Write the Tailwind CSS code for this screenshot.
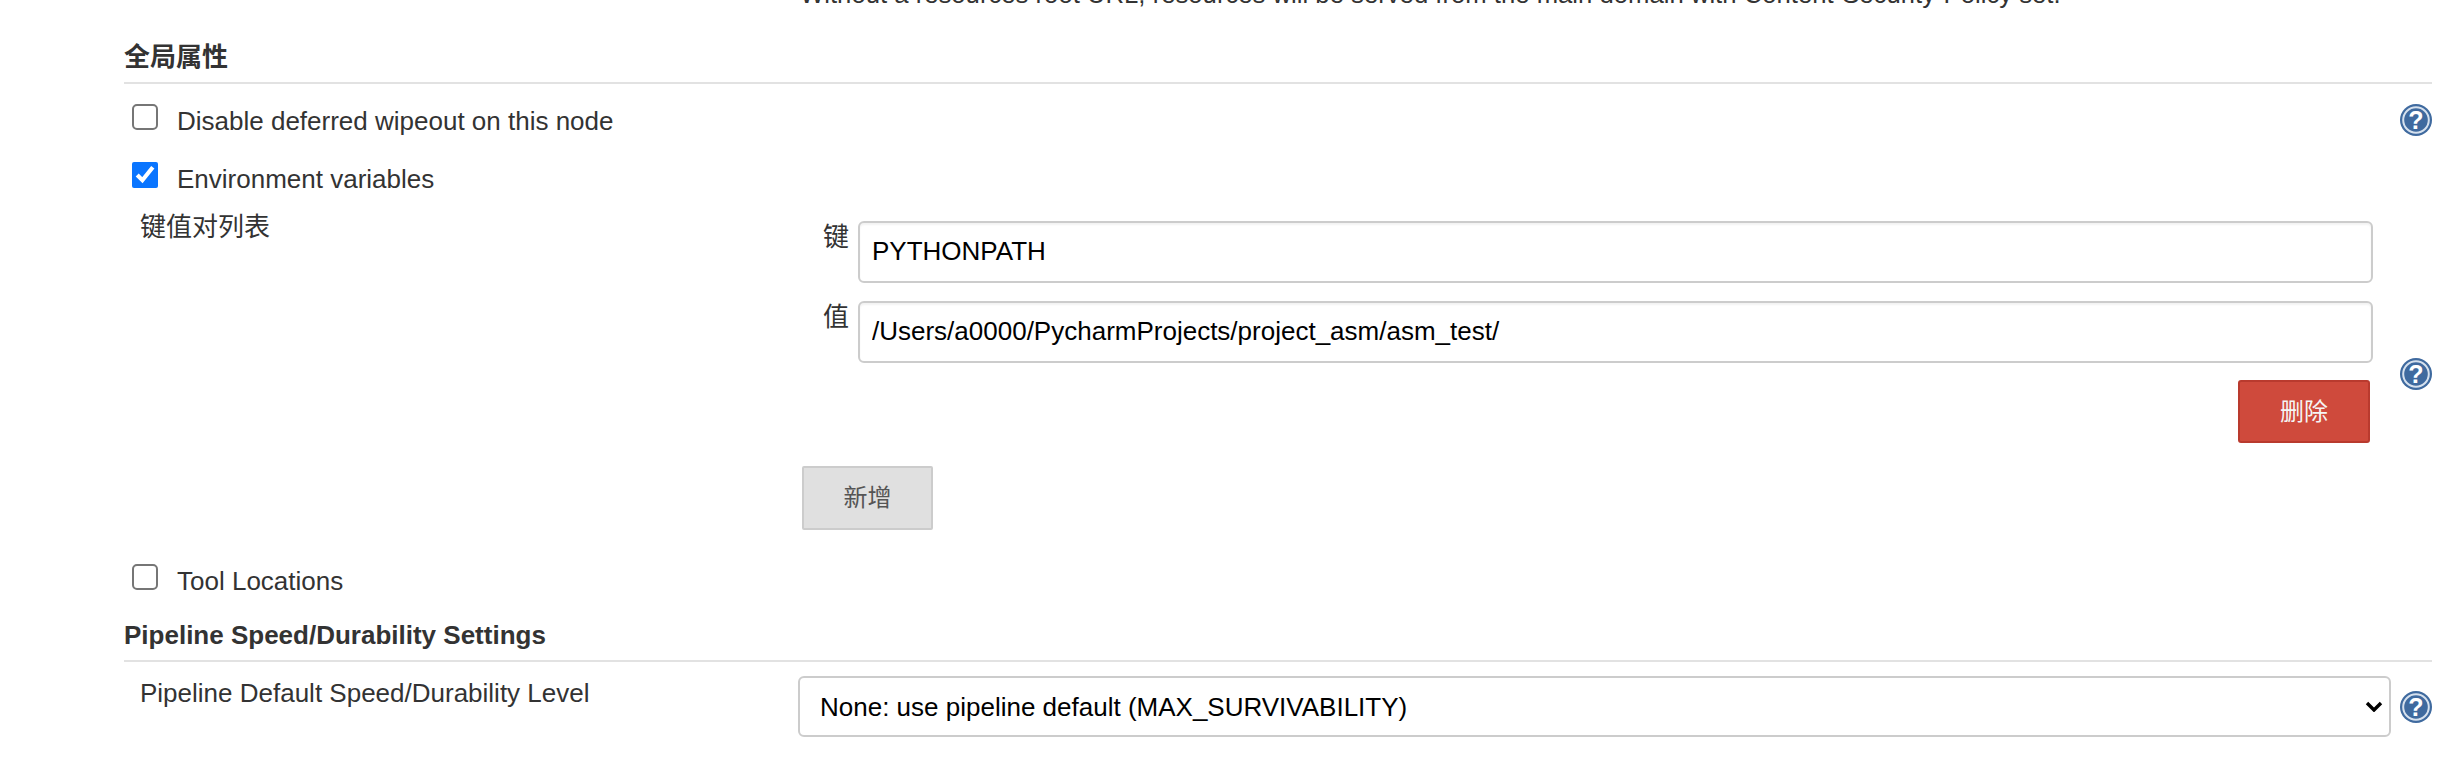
<!DOCTYPE html>
<html lang="zh-CN">
<head>
  <meta charset="UTF-8" />
  <title>全局属性</title>
  <script src="https://cdn.jsdelivr.net/npm/@tailwindcss/browser@4"></script>
</head>
<body class="h-[764px] overflow-hidden bg-white text-[#333] text-[26px] leading-[36px] font-['Liberation_Sans','Noto_Sans_CJK_SC',sans-serif]">
<main class="w-[2308px] ml-[124px]">

  <!-- 上一段被截掉的说明 -->
  <div class="flex h-[5px] pl-[676px]"><p class="-mt-[24px] whitespace-nowrap text-[25.7px]">Without a resources root URL, resources will be served from the main domain with Content-Security-Policy set.</p></div>

  <!-- 全局属性 -->
  <h2 class="mt-[38px] pb-[10px] font-bold text-[26px] leading-[29px] border-b-2 border-[#e2e2e2]">全局属性</h2>

  <div class="flex items-start mt-[20px] pl-[8px] h-[26px]">
    <input type="checkbox" class="appearance-none w-[26px] h-[26px] m-0 border-2 border-[#767676] rounded-[5px] bg-white" />
    <span class="ml-[19px] mt-[-1px]">Disable deferred wipeout on this node</span>
    <svg class="ml-auto" width="32" height="32" viewBox="0 0 32 32"><use href="#help" /></svg>
  </div>

  <div class="flex items-start mt-[32px] pl-[8px] h-[26px]">
    <input type="checkbox" checked class="w-[26px] h-[26px] m-0 accent-[#0a75ff]" />
    <span class="ml-[19px] mt-[-1px]">Environment variables</span>
  </div>

  <!-- 键值对列表 -->
  <div class="flex mt-[22px]">
    <div class="w-[678px] pl-[16px] mt-[-1px]">键值对列表</div>
    <div class="flex-1 pt-[11px]">
      <div class="pl-[23px]">
        <div class="flex">
          <span class="w-[35px] h-[36px] -mt-[2px]">键</span>
          <input value="PYTHONPATH" class="w-[1515px] h-[62px] pl-[12px] pr-[11px] pb-[2px] border-2 border-[#ccc] rounded-[6px] text-black shadow-[inset_0_2px_2px_rgba(0,0,0,0.05)]" />
        </div>
        <div class="flex mt-[18px]">
          <span class="w-[35px] h-[36px] -mt-[2px]">值</span>
          <input value="/Users/a0000/PycharmProjects/project_asm/asm_test/" class="w-[1515px] h-[62px] pl-[12px] pr-[11px] pb-[2px] border-2 border-[#ccc] rounded-[6px] text-black shadow-[inset_0_2px_2px_rgba(0,0,0,0.05)]" />
        </div>
      </div>
      <div class="flex mt-[17px]">
        <button class="ml-[1438px] w-[132px] h-[63px] bg-[#cf4a3c] border-2 border-[#b93a2e] rounded-[3px] text-[#f5f5f5] text-[24px]">删除</button>
        <svg class="ml-[30px] -mt-[22px]" width="32" height="32" viewBox="0 0 32 32"><use href="#help" /></svg>
      </div>
      <button class="block mt-[23px] ml-[2px] w-[131px] h-[64px] bg-[#e0e0e0] border-2 border-[#ccc] rounded-[2px] text-[#555] text-[24px]">新增</button>
    </div>
  </div>

  <div class="flex items-start mt-[34px] pl-[8px] h-[26px]">
    <input type="checkbox" class="appearance-none w-[26px] h-[26px] m-0 border-2 border-[#767676] rounded-[5px] bg-white" />
    <span class="ml-[19px] mt-[-1px]">Tool Locations</span>
  </div>

  <!-- Pipeline -->
  <h2 class="mt-[31px] pb-[10px] font-bold text-[26px] leading-[29px] border-b-2 border-[#e2e2e2]">Pipeline Speed/Durability Settings</h2>

  <div class="flex items-start mt-[14px]">
    <div class="w-[674px] pl-[16px] -mt-[1px]">Pipeline Default Speed/Durability Level</div>
    <div class="relative w-[1593px] h-[61px]">
      <select class="w-full h-full appearance-none pl-[20px] border-2 border-[#ccc] rounded-[6px] bg-white text-black">
        <option>None: use pipeline default (MAX_SURVIVABILITY)</option>
      </select>
      <svg class="absolute right-[8px] top-[25px]" width="18" height="11" viewBox="0 0 18 11"><path d="M2 2l7 7 7-7" fill="none" stroke="#000" stroke-width="3.4" /></svg>
    </div>
    <svg class="ml-[9px] mt-[15px]" width="32" height="32" viewBox="0 0 32 32"><use href="#help" /></svg>
  </div>
</main>

<!-- 问号图标 -->
<svg class="hidden" width="0" height="0">
  <defs>
    <radialGradient id="helpFill" cx="0.3" cy="0.3" r="0.95">
      <stop offset="0" stop-color="#173f7e" />
      <stop offset="0.55" stop-color="#26548f" />
      <stop offset="1" stop-color="#a5bfdc" />
    </radialGradient>
    <symbol id="help" viewBox="0 0 32 32">
      <circle cx="16" cy="16" r="16" fill="#3f6a9f" />
      <circle cx="16" cy="16" r="12.8" fill="url(#helpFill)" stroke="#d6e1ee" stroke-width="2" />
      <text x="16" y="25" text-anchor="middle" font-size="25" font-weight="700" fill="#fff" font-family="Liberation Sans">?</text>
    </symbol>
  </defs>
</svg>
</body>
</html>
